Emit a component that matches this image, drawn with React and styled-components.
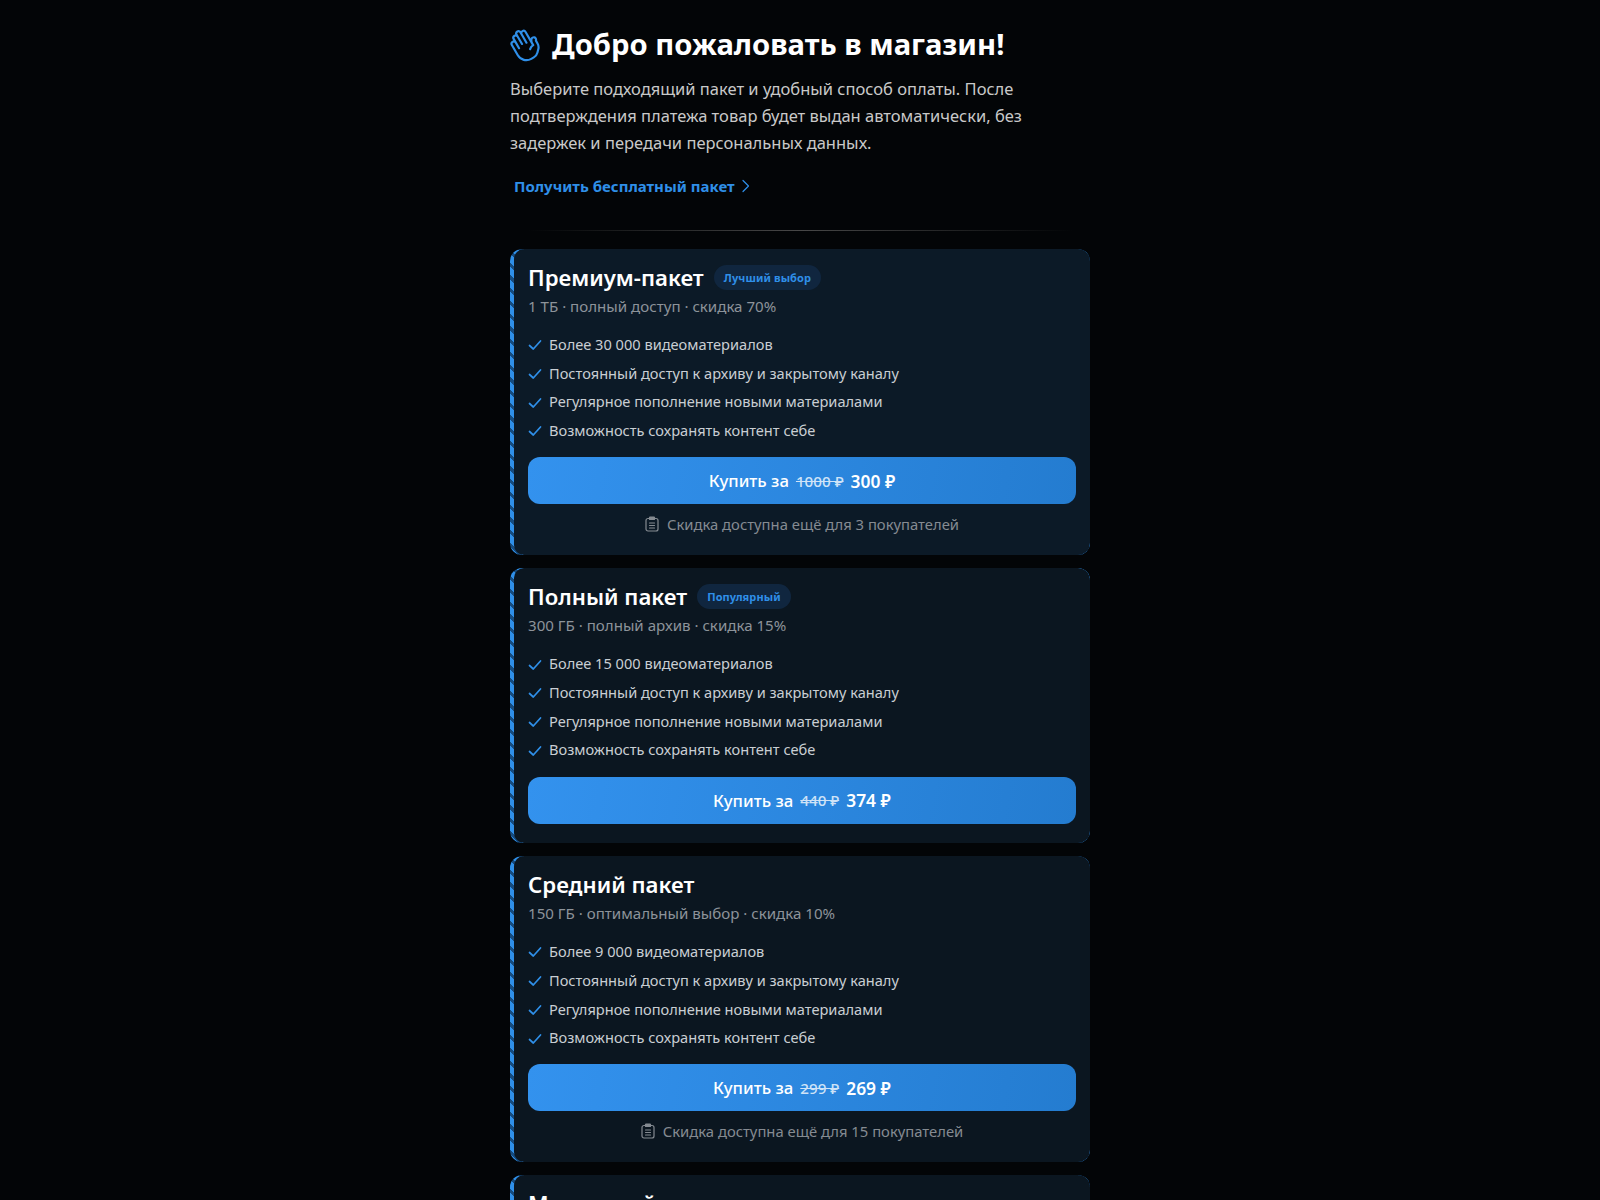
import React from "react";
import styled, { createGlobalStyle } from "styled-components";
import { HiOutlineHandRaised } from "react-icons/hi2";

const Global = createGlobalStyle`
  html, body { margin: 0; padding: 0; background: #030507; }
  body { font-family: "Noto Sans", "Open Sans", sans-serif; color: #fff; }
`;
const Page = styled.main`
  width: 580px;
  height: 1176px;
  overflow: hidden;
  margin: 0 auto;
  padding-top: 24px;
`;
const Heading = styled.h1`
  display: flex;
  align-items: center;
  gap: 12px;
  margin: 0;
  font-size: 29.2px;
  line-height: 40px;
  font-weight: 700;
`;
const HandBox = styled.span`
  display: flex;
  align-items: center;
  justify-content: center;
  flex: none;
  width: 30px;
  height: 40px;
  color: #2f8fe8;
  svg { flex: none; transform: rotate(-30deg); }
`;
const Intro = styled.p`
  margin: 11px 0 0;
  font-size: 16.5px;
  line-height: 27px;
  color: #c9c9c9;
`;
const FreeLink = styled.a`
  display: inline-flex;
  align-items: center;
  gap: 4px;
  margin: 18px 0 0 4px;
  font-size: 15px;
  line-height: 24px;
  font-weight: 700;
  color: #2f8fe8;
`;
const Divider = styled.hr`
  border: 0;
  height: 1px;
  margin: 32px 0 18px;
  background: linear-gradient(90deg, transparent 3%, #484848 50%, transparent 97%);
`;
const Cards = styled.div`
  display: flex;
  flex-direction: column;
  gap: 13px;
`;
const Card = styled.section`
  overflow: hidden;
  border-radius: 12px;
  background: repeating-linear-gradient(45deg, #2f8fe8 0 6px, #164c80 6px 9px);
`;
const CardBody = styled.div`
  margin-left: 4px;
  border-radius: 10px 12px 12px 10px;
  background: ${(p) => (p.$featured ? "#0c1a27" : "#0b1620")};
  padding: 13px 14px 19.5px;
`;
const TitleRow = styled.div`
  display: flex;
  align-items: center;
  gap: 10px;
`;
const Title = styled.h2`
  margin: 0;
  font-size: 22.2px;
  line-height: 31px;
  font-weight: 600;
`;
const Badge = styled.span`
  font-size: 11px;
  line-height: 14px;
  font-weight: 700;
  letter-spacing: 0.1px;
  color: #2f8fe8;
  background: #10263f;
  border-radius: 13px;
  padding: 5.5px 10px;
`;
const Sub = styled.div`
  font-size: 15.1px;
  line-height: 26px;
  color: #8d939a;
`;
const Features = styled.ul`
  list-style: none;
  margin: 11px 0 0;
  padding: 0;
`;
const Feature = styled.li`
  display: flex;
  align-items: center;
  gap: 7px;
  font-size: 14.6px;
  line-height: 28.7px;
  color: #c9ced3;
  svg { flex: none; position: relative; top: 1px; }
`;
const BuyButton = styled.button`
  display: flex;
  align-items: center;
  justify-content: center;
  gap: 7px;
  width: 100%;
  height: 47px;
  margin-top: 12.5px;
  border: 0;
  border-radius: 12px;
  background: linear-gradient(100deg, #3392ee, #247cd0);
  color: #fff;
  font-family: inherit;
  font-size: 16.8px;
  font-weight: 500;
`;
const OldPrice = styled.s`
  font-size: 15.2px;
  color: #cfe3f7;
`;
const NewPrice = styled.b`
  font-size: 17.4px;
  font-weight: 600;
`;
const Note = styled.div`
  display: flex;
  align-items: center;
  justify-content: center;
  gap: 8px;
  margin: 8px 0 -0.5px;
  font-size: 14.8px;
  line-height: 24px;
  color: #858b92;
`;

const Chevron = () => (
  <svg width="14" height="16" viewBox="0 0 14 16" fill="none" stroke="#2f8fe8" strokeWidth="1.2" strokeLinecap="round" strokeLinejoin="round">
    <path d="M4 2.500l5.500 5.500-5.500 5.500" />
  </svg>
);
const Check = () => (
  <svg width="14" height="14" viewBox="0 0 14 14" fill="none" stroke="#2f8fe8" strokeWidth="1.7" strokeLinecap="round" strokeLinejoin="round">
    <path d="M1.500 7.500 5.300 11 12.500 3" />
  </svg>
);
const Clip = () => (
  <svg width="14" height="16" viewBox="0 0 14 16" fill="none" stroke="#858b92" strokeWidth="1.2" strokeLinecap="round" strokeLinejoin="round">
    <rect x="1" y="2.500" width="12" height="12.500" rx="2" />
    <rect x="4.500" y="1" width="5" height="2.500" rx=".6" fill="#858b92" />
    <path d="M4.500 7h5M4.500 9.500h5M4.500 12h5" />
  </svg>
);

const perks = [
  "Постоянный доступ к архиву и закрытому каналу",
  "Регулярное пополнение новыми материалами",
  "Возможность сохранять контент себе",
];
const packs = [
  { title: "Премиум-пакет", featured: true, badge: "Лучший выбор", sub: "1 ТБ · полный доступ · скидка 70%", first: "Более 30 000 видеоматериалов", old: "1000 ₽", price: "300 ₽", note: "Скидка доступна ещё для 3 покупателей" },
  { title: "Полный пакет", badge: "Популярный", sub: "300 ГБ · полный архив · скидка 15%", first: "Более 15 000 видеоматериалов", old: "440 ₽", price: "374 ₽" },
  { title: "Средний пакет", sub: "150 ГБ · оптимальный выбор · скидка 10%", first: "Более 9 000 видеоматериалов", old: "299 ₽", price: "269 ₽", note: "Скидка доступна ещё для 15 покупателей" },
  { title: "Маленький пакет" },
];

export default function App() {
  return (
    <Page>
      <Global />
      <Heading><HandBox><HiOutlineHandRaised size={35} /></HandBox>Добро пожаловать в магазин!</Heading>
      <Intro>
        Выберите подходящий пакет и удобный способ оплаты. После подтверждения платежа товар будет выдан автоматически, без задержек и передачи персональных данных.
      </Intro>
      <FreeLink>Получить бесплатный пакет <Chevron /></FreeLink>
      <Divider />
      <Cards>
        {packs.map((p) => (
          <Card key={p.title}>
            <CardBody $featured={p.featured}>
              <TitleRow>
                <Title>{p.title}</Title>
                {p.badge && <Badge>{p.badge}</Badge>}
              </TitleRow>
              {p.sub && <Sub>{p.sub}</Sub>}
              {p.first && (
                <Features>
                  {[p.first, ...perks].map((f) => (
                    <Feature key={f}><Check />{f}</Feature>
                  ))}
                </Features>
              )}
              {p.price && <BuyButton>Купить за <OldPrice>{p.old}</OldPrice> <NewPrice>{p.price}</NewPrice></BuyButton>}
              {p.note && <Note><Clip />{p.note}</Note>}
            </CardBody>
          </Card>
        ))}
      </Cards>
    </Page>
  );
}
